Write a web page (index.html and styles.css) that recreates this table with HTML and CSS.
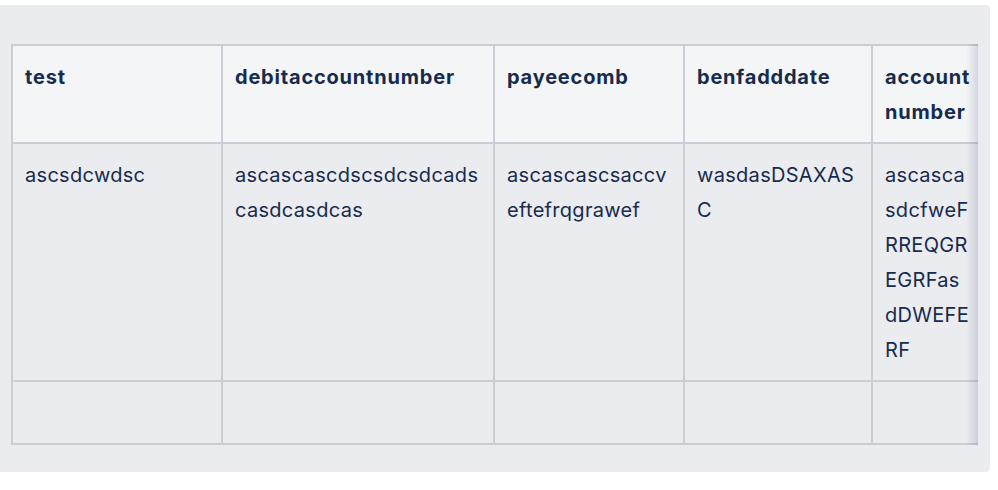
FILE: index.html
```html
<!DOCTYPE html>
<html>
<head>
<meta charset="utf-8">
<link rel="stylesheet" href="styles.css">
</head>
<body>
<div class="card">
  <div class="scroll">
    <table class="grid">
      <colgroup>
        <col class="c1"><col class="c2"><col class="c3"><col class="c4"><col class="c5">
      </colgroup>
      <thead>
        <tr>
          <th>test</th>
          <th>debitaccountnumber</th>
          <th>payeecomb</th>
          <th>benfadddate</th>
          <th>account number</th>
        </tr>
      </thead>
      <tbody>
        <tr>
          <td>ascsdcwdsc</td>
          <td>ascascascdscsdcsdcadscasdcasdcas</td>
          <td>ascascascsaccveftefrqgrawef</td>
          <td>wasdasDSAXASC</td>
          <td>ascascasdcfweFRREQGREGRFasdDWEFERF</td>
        </tr>
        <tr class="empty">
          <td></td><td></td><td></td><td></td><td></td>
        </tr>
      </tbody>
    </table>
    <div class="shadow"></div>
  </div>
</div>
</body>
</html>
```
FILE: styles.css
```css
html, body {
  margin: 0;
  padding: 0;
  background: #ffffff;
}
body {
  font-family: Inter, "Noto Sans", sans-serif;
  color: #172b4d;
}
.card {
  margin: 5px 8px 0 -4px;
  padding: 39px 12px 27px 15px;
  background: #ebecf0;
  border-radius: 4px;
}
.scroll {
  position: relative;
  overflow: hidden;
}
.grid {
  border-collapse: collapse;
  table-layout: fixed;
  width: 972px;
}
.c1 { width: 210px; }
.c2 { width: 272px; }
.c3 { width: 190px; }
.c4 { width: 188px; }
.c5 { width: 112px; }
.grid th,
.grid td {
  border: 2px solid #c9ced6;
  padding: 14px 12px 12px 12px;
  font-size: 20px;
  line-height: 35px;
  letter-spacing: 0.3px;
  text-align: left;
  vertical-align: top;
  word-break: break-all;
}
.grid th {
  background: #f4f5f7;
  font-weight: 700;
  letter-spacing: 0.8px;
  word-break: normal;
}
.grid td {
  background: #ebecf0;
  font-weight: 400;
}
.empty td {
  height: 35px;
}
.shadow {
  position: absolute;
  top: 0;
  right: 0;
  bottom: 0;
  width: 12px;
  background: linear-gradient(to left, rgba(9, 30, 66, 0.14), rgba(9, 30, 66, 0));
}
```
